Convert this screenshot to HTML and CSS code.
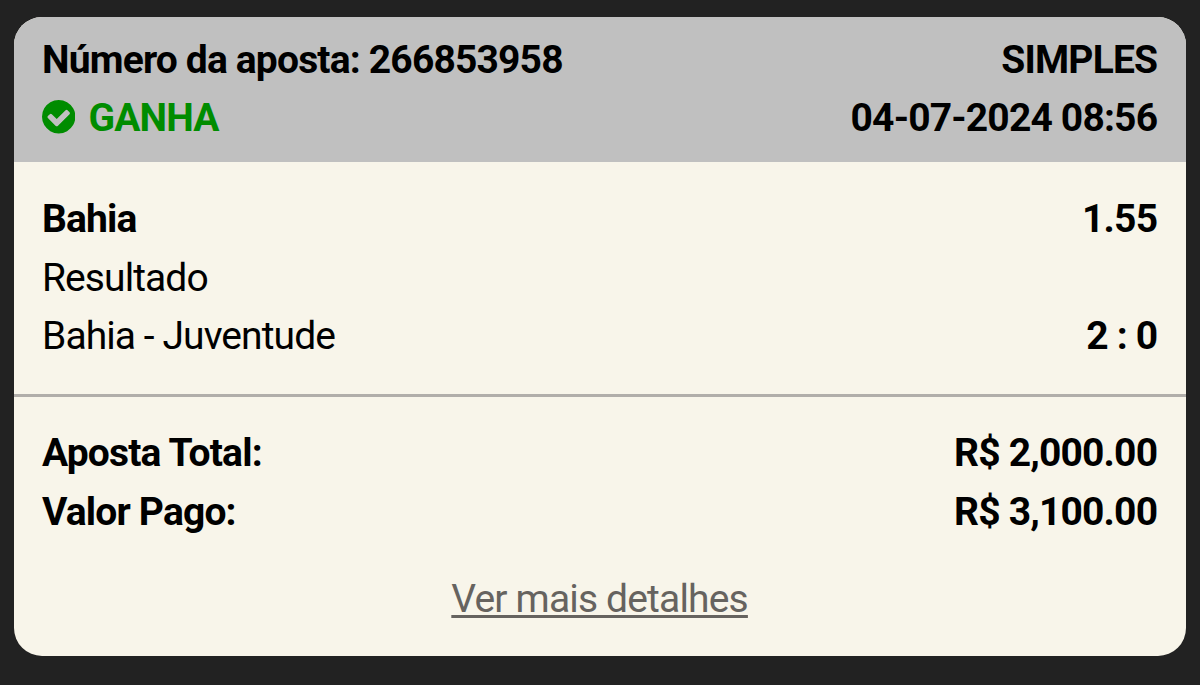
FILE: index.html
```html
<!DOCTYPE html>
<html lang="pt-BR">
<head>
    <meta charset="UTF-8">
    <meta name="viewport" content="width=device-width, initial-scale=1.0">
    <title>Aposta</title>
    <link rel="stylesheet" href="styles.css">
</head>
<body>
    <div class="ticket">
        <div class="ticket-header">
            <div class="row">
                <span class="bet-number">Número da aposta: 266853958</span>
                <span class="bet-type">SIMPLES</span>
            </div>
            <div class="row">
                <span class="status">
                    <svg class="status-icon" viewBox="128 128 1536 1536"><path fill="currentColor" d="M1412 734q0-28-18-46l-91-90q-19-19-45-19t-45 19l-408 407-226-226q-19-19-45-19t-45 19l-91 90q-18 18-18 46 0 27 18 45l362 362q19 19 45 19 27 0 46-19l543-543q18-18 18-45zm252 162q0 209-103 385.500t-279.500 279.500-385.500 103-385.500-103-279.500-279.500-103-385.500 103-385.500 279.500-279.500 385.500-103 385.500 103 279.500 279.500 103 385.500z"/></svg>
                    <span class="status-text">GANHA</span>
                </span>
                <span class="date">04-07-2024 08:56</span>
            </div>
        </div>

        <div class="event">
            <div class="row">
                <span class="pick">Bahia</span>
                <span class="odds">1.55</span>
            </div>
            <div class="row">
                <span class="market">Resultado</span>
            </div>
            <div class="row">
                <span class="match">Bahia - Juventude</span>
                <span class="score">2 : 0</span>
            </div>
        </div>

        <div class="totals">
            <div class="row">
                <span class="stake-label">Aposta Total:</span>
                <span class="stake">R$ 2,000.00</span>
            </div>
            <div class="row">
                <span class="payout-label">Valor Pago:</span>
                <span class="payout">R$ 3,100.00</span>
            </div>
            <a class="details" href="#">Ver mais detalhes</a>
        </div>
    </div>
</body>
</html>
```
FILE: styles.css
```css
body {
    background-color: #222;
    font-family: Roboto, sans-serif;
    font-size: 39px;
    letter-spacing: -0.83px;
    color: #000;
    margin: 0;
    padding: 16.6px 14px 29px;
}

.ticket {
    background-color: #f8f5ea;
    border-radius: 28px;
    height: 639.4px;
    overflow: hidden;
}

.row {
    display: flex;
    justify-content: space-between;
    align-items: center;
    height: 58.6px;
    font-weight: bold;
    white-space: nowrap;
}

/* Header */
.ticket-header {
    background-color: #c0c0c0;
    height: 131.4px;
    padding: 14px 28.8px 0 28px;
}

.status {
    display: flex;
    align-items: center;
    gap: 13px;
    color: #008c00;
}

.status-icon {
    width: 33.4px;
    height: 33.4px;
    margin-top: -3px;
}

/* Selection */
.event {
    height: 204px;
    padding: 28px 28.8px 0 28px;
    border-bottom: 3px solid #b1aeaa;
}

.market,
.match {
    font-weight: normal;
    letter-spacing: -0.92px;
}

/* Totals */
.totals {
    padding: 27px 28.8px 0 28px;
}

.details {
    display: block;
    width: fit-content;
    margin: 35px auto 0;
    color: #66635f;
    text-decoration-thickness: 3px;
    text-underline-offset: 3px;
}
```
